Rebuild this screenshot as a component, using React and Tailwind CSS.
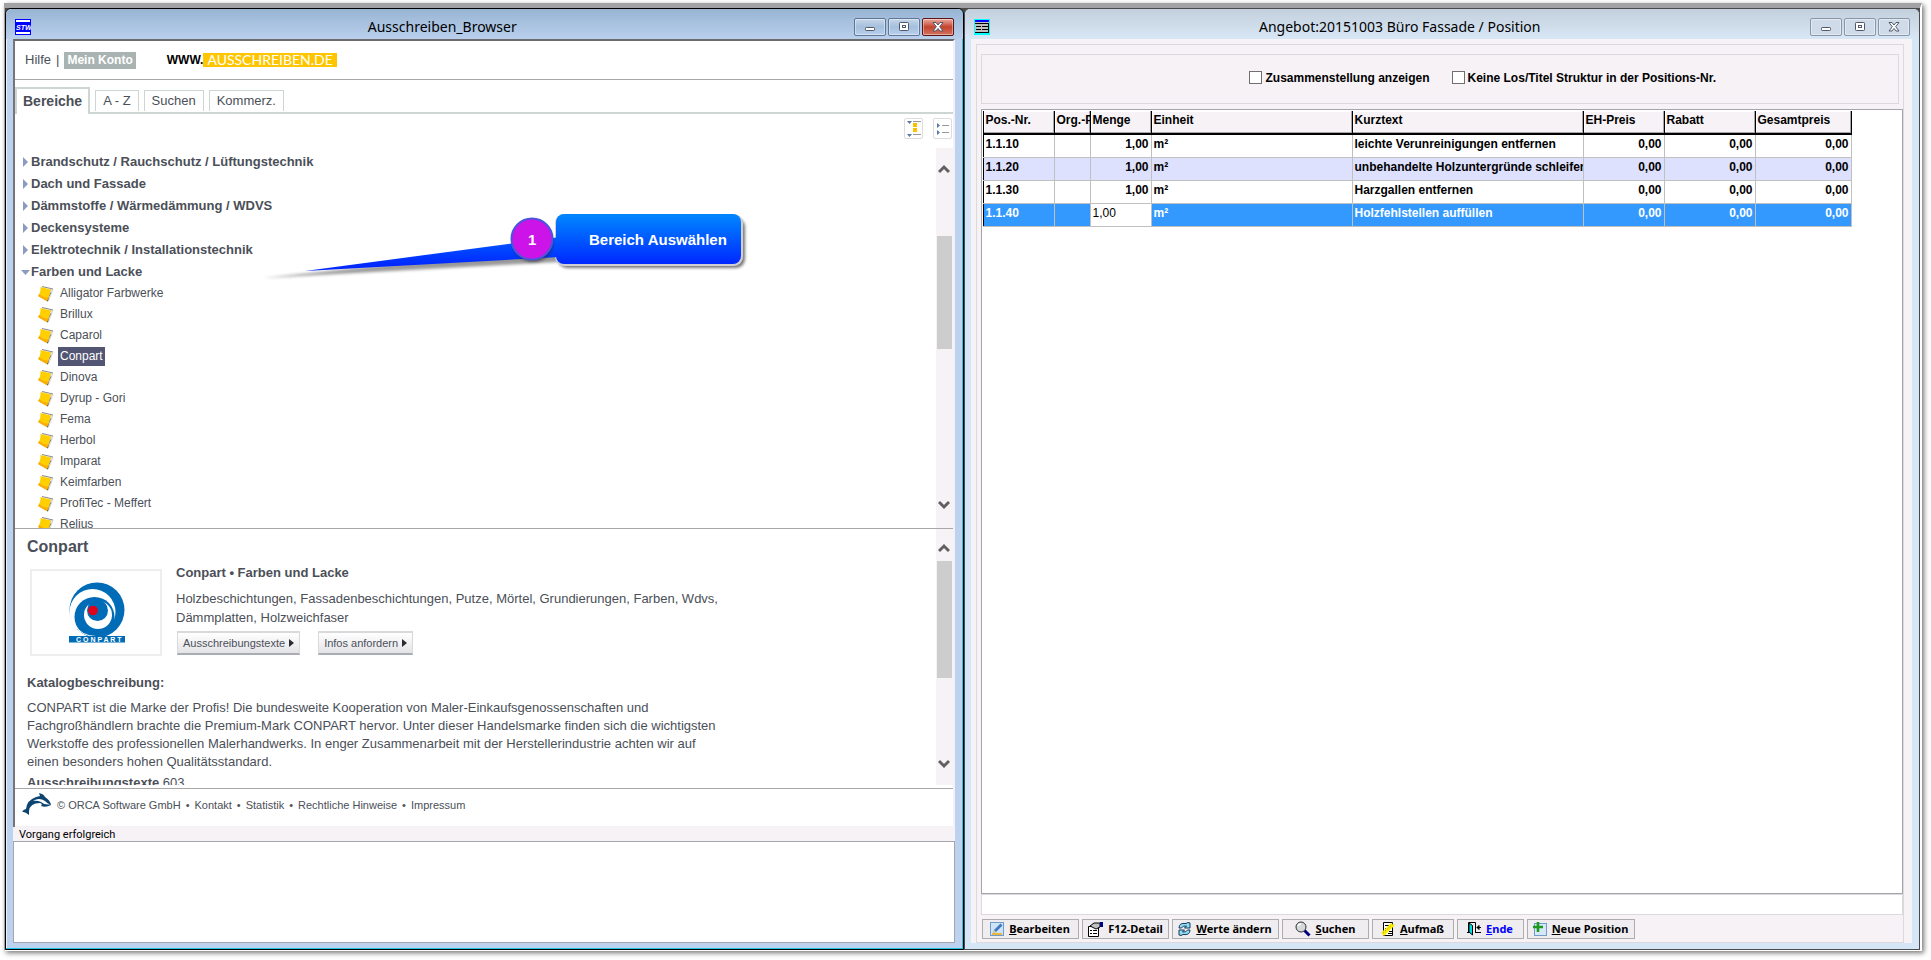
import React, { useState } from 'react';

const groups = [
  'Brandschutz / Rauchschutz / Lüftungstechnik',
  'Dach und Fassade',
  'Dämmstoffe / Wärmedämmung / WDVS',
  'Deckensysteme',
  'Elektrotechnik / Installationstechnik',
];

const vendors = [
  'Alligator Farbwerke', 'Brillux', 'Caparol', 'Conpart', 'Dinova', 'Dyrup - Gori',
  'Fema', 'Herbol', 'Imparat', 'Keimfarben', 'ProfiTec - Meffert', 'Relius',
];

const columns = [
  { label: 'Pos.-Nr.', width: 'w-[71px]' },
  { label: 'Org.-P', width: 'w-[36px]' },
  { label: 'Menge', width: 'w-[61px]' },
  { label: 'Einheit', width: 'w-[201px]' },
  { label: 'Kurztext', width: 'w-[231px]' },
  { label: 'EH-Preis', width: 'w-[81px]' },
  { label: 'Rabatt', width: 'w-[91px]' },
  { label: 'Gesamtpreis', width: 'w-[96px]' },
];

const positions = [
  { nr: '1.1.10', text: 'leichte Verunreinigungen entfernen' },
  { nr: '1.1.20', text: 'unbehandelte Holzuntergründe schleifen' },
  { nr: '1.1.30', text: 'Harzgallen entfernen' },
  { nr: '1.1.40', text: 'Holzfehlstellen auffüllen' },
];

const App = () => {
  return (
    <div className="h-screen min-h-[760px] overflow-hidden bg-white pt-[3px] pr-[9px] pb-[9px] pl-1">
      <div className="flex h-full border-t-[5px] border-r-2 border-b border-l border-t-[#a2a2a4] border-r-white border-b-white border-l-[#a2a2a4] bg-[#4a4a4a] shadow-[2px_2px_5px_#777]">
        <BrowserWindow />
        <OfferWindow />
      </div>
    </div>
  );
};

const BrowserWindow = () => {
  const [selected, setSelected] = useState('Conpart');

  return (
    <section className="relative flex min-w-0 flex-[959] flex-col rounded-t-md border border-black bg-[#bcd2ef] font-['Liberation_Sans',Arial,sans-serif] text-[#4b4f58] shadow-[inset_-1px_-1px_0_#22c7e8,inset_1px_1px_0_#eaf4fc]">
      <TitleBar title="Ausschreiben_Browser" icon={<StwIcon />} active />
      <div className="mr-2 mb-[6px] ml-[7px] flex min-h-0 flex-1 flex-col bg-[#f6f2f6]">
        <div className="flex min-h-0 flex-1 flex-col border-2 border-t-[#6d6a70] border-r-[#f4f2f4] border-b-0 border-l-[#77747a] bg-white">
          <header className="flex h-[39px] shrink-0 items-center border-b border-[#a8a8a8] pl-[10px] text-[13px]">
            <a href="#hilfe">Hilfe</a>
            <span className="mx-[5px]">|</span>
            <a href="#konto" className="bg-[#a9b3b1] px-[3px] text-[12px] leading-[17px] font-bold text-white">Mein Konto</a>
            <a href="#start" className="ml-[31px] flex items-center leading-[14px]">
              <span className="text-[12px] font-bold text-black">WWW.</span>
              <span className="flex h-[14px] items-center bg-[#ffc600] px-1 font-['Lato',sans-serif] text-[14px] text-white">AUSSCHREIBEN.DE</span>
            </a>
          </header>

          <nav className="flex h-[34px] shrink-0 items-end gap-[5px] text-[13px] shadow-[inset_0_-2px_0_#ced6d4]">
            <button className="h-[27px] border-2 border-b-0 border-[#ced6d4] bg-white px-[6px] text-[14px] font-bold">Bereiche</button>
            <button className="mb-[3px] h-[21px] border border-b-0 border-[#ced6d4] px-[7px]">A - Z</button>
            <button className="mb-[3px] h-[21px] border border-b-0 border-[#ced6d4] px-[7px]">Suchen</button>
            <button className="mb-[3px] h-[21px] border border-b-0 border-[#ced6d4] px-[7px]">Kommerz.</button>
          </nav>

          <div className="flex h-[34px] shrink-0 items-start justify-end gap-[10px] pt-1 pr-px">
            <button aria-label="Alle aufklappen" className="h-[21px] w-[19px] rounded-xs border border-[#ddd]"><ExpandIcon /></button>
            <button aria-label="Alle zuklappen" className="h-[21px] w-[19px] rounded-xs border border-[#ddd]"><CollapseIcon /></button>
          </div>

          <div className="flex min-h-0 flex-1 border-b border-[#a8a8a8]">
            <ul className="min-w-0 flex-1 overflow-hidden pt-[3px] text-[13px] font-bold">
              {groups.map((name) => (
                <li key={name} className="flex h-[22px] items-center pl-2">
                  <button className="flex items-center gap-[3px]">
                    <svg width="5" height="10" viewBox="0 0 5 10"><path d="M0 0L5 5L0 10Z" fill="#8c9cc0" /></svg>
                    {name}
                  </button>
                </li>
              ))}
              <li>
                <button className="flex h-[22px] items-center gap-[1px] pl-[6px]">
                  <svg width="9" height="5" viewBox="0 0 9 5"><path d="M0 0H9L4.5 5Z" fill="#8c9cc0" /></svg>
                  Farben und Lacke
                </button>
                <ul className="text-[12px] font-normal">
                  {vendors.map((name) => (
                    <li key={name} className="flex h-[21px] items-center gap-1 pl-[23px]">
                      <CatalogIcon />
                      <button
                        onClick={() => setSelected(name)}
                        className={name === selected ? 'bg-[#525672] px-[2px] leading-[19px] text-white' : 'px-[2px] leading-[19px]'}
                      >
                        {name}
                      </button>
                    </li>
                  ))}
                </ul>
              </li>
            </ul>
            <ScrollBar className="pt-[16px] pb-[18px]" thumb="mt-[62px] h-[113px]" />
          </div>

          <div className="flex h-[260px] shrink-0 border-b border-[#a8a8a8] pb-[3px]">
            <article className="min-w-0 flex-1 overflow-hidden pt-2 pl-3 text-[13px]">
              <h1 className="text-[16px] leading-5 font-bold">Conpart</h1>
              <div className="mt-[12px] flex gap-[14px] pl-[3px]">
                <div className="flex h-[87px] w-[132px] shrink-0 justify-center border-2 border-[#eee] pt-[11px] pl-px">
                  <ConpartLogo />
                </div>
                <div className="-mt-1">
                  <h2 className="leading-4 font-bold">Conpart • Farben und Lacke</h2>
                  <p className="mt-2 max-w-[570px] leading-[19px]">
                    Holzbeschichtungen, Fassadenbeschichtungen, Putze, Mörtel, Grundierungen, Farben, Wdvs,<br />
                    Dämmplatten, Holzweichfaser
                  </p>
                  <div className="mt-1 ml-px flex gap-[18px]">
                    <MoreButton>Ausschreibungstexte</MoreButton>
                    <MoreButton>Infos anfordern</MoreButton>
                  </div>
                </div>
              </div>
              <h2 className="mt-[19px] leading-4 font-bold">Katalogbeschreibung:</h2>
              <p className="mt-2 max-w-[720px] leading-[18px]">
                CONPART ist die Marke der Profis! Die bundesweite Kooperation von Maler-Einkaufsgenossenschaften und<br />
                Fachgroßhändlern brachte die Premium-Mark CONPART hervor. Unter dieser Handelsmarke finden sich die wichtigsten<br />
                Werkstoffe des professionellen Malerhandwerks. In enger Zusammenarbeit mit der Herstellerindustrie achten wir auf<br />
                einen besonders hohen Qualitätsstandard.
              </p>
              <p className="mt-1 leading-4"><b>Ausschreibungstexte</b> 603</p>
            </article>
            <ScrollBar className="pt-[14px] pb-[16px]" thumb="mt-[8px] h-[117px]" />
          </div>

          <footer className="flex h-[38px] shrink-0 items-center gap-[5px] border-b border-[#f4f2f4] pb-[5px] pl-[7px] text-[11px]">
            <OrcaIcon />
            <span className="ml-px">© ORCA Software GmbH</span>
            <span>•</span><a href="#kontakt">Kontakt</a>
            <span>•</span><a href="#statistik">Statistik</a>
            <span>•</span><a href="#recht">Rechtliche Hinweise</a>
            <span>•</span><a href="#impressum">Impressum</a>
          </footer>
        </div>
        <label htmlFor="log" className="h-[14px] shrink-0 pl-[6px] font-['Roboto',sans-serif] text-[11px] leading-4 text-black">Vorgang erfolgreich</label>
        <textarea id="log" readOnly className="h-[102px] shrink-0 resize-none border border-[#a5a5ad] bg-white" />
      </div>
      <Callout />
    </section>
  );
};

const OfferWindow = () => (
  <section className="flex min-w-0 flex-[957] flex-col rounded-t-md border border-[#4a4a4a] bg-[#d5e6f6]">
    <TitleBar title="Angebot:20151003 Büro Fassade / Position" icon={<TableIcon />} />
    <div className="mr-[7px] mb-[6px] ml-[6px] flex min-h-0 flex-1 flex-col bg-[#f6f2f6] pt-[5px] pr-2 pl-[5px] font-['Liberation_Sans',Arial,sans-serif] text-[12px] font-bold text-black">
      <div className="flex min-h-0 flex-1 flex-col border border-[#dcd9de] pt-[9px] pl-1">
        <div className="mr-1 flex h-[50px] shrink-0 items-center justify-center gap-[22px] border border-[#dcd9de] pb-[3px] pl-[86px]">
          <Check id="summary" label="Zusammenstellung anzeigen" />
          <Check id="structure" label="Keine Los/Titel Struktur in der Positions-Nr." />
        </div>

        <div className="mt-[5px] min-h-0 flex-1 overflow-hidden border border-[#a5a5ad] bg-white pt-px pl-px">
          <table className="w-[869px] table-fixed border-collapse text-left">
            <thead>
              <tr className="h-[23px]">
                {columns.map((col) => (
                  <th key={col.label} className={`${col.width} overflow-hidden border-r border-b-2 border-l border-black bg-[#f6f2f6] px-[2px] pb-1 leading-4 whitespace-nowrap shadow-[inset_-1px_-1px_0_#a9a6ab,inset_1px_1px_0_#fff]`}>
                    {col.label}
                  </th>
                ))}
              </tr>
            </thead>
            <tbody>
              {positions.map((row, i) => (
                <PositionRow key={row.nr} row={row} striped={i === 1} active={i === 3} />
              ))}
            </tbody>
          </table>
        </div>

        <div className="h-[21px] shrink-0 border border-[#dcd9de] bg-white" />

        <div className="mt-1 mb-[3px] flex h-5 shrink-0 gap-[3px] pl-px font-['Noto_Sans',sans-serif] text-[11px]">
          <ToolButton width="w-[97px]" icon={<EditIcon />} hot="B" rest="earbeiten" />
          <ToolButton width="w-[87px]" icon={<DetailIcon />} hot="" rest="F12-Detail" />
          <ToolButton width="w-[107px]" icon={<RefreshIcon />} hot="W" rest="erte ändern" />
          <ToolButton width="w-[87px]" icon={<SearchIcon />} hot="S" rest="uchen" />
          <ToolButton width="w-[82px]" icon={<MeasureIcon />} hot="A" rest="ufmaß" />
          <ToolButton width="w-[67px]" icon={<ExitIcon />} hot="E" rest="nde" blue />
          <ToolButton width="w-[108px]" icon={<NewIcon />} hot="N" rest="eue Position" />
        </div>
      </div>
    </div>
  </section>
);

const PositionRow = ({ row, striped, active }) => {
  const cell = 'h-[23px] overflow-hidden border border-[#c0c0c0] px-[2px] pb-1 leading-4 whitespace-nowrap';
  const tone = active ? 'bg-[#3399ff] text-white' : striped ? 'bg-[#dde1fd]' : 'bg-white';

  return (
    <tr className={tone}>
      <td className={`${cell} border-l-black`}>{row.nr}</td>
      <td className={cell} />
      {active ? (
        <td className="h-[23px] border border-[#c0c0c0] bg-white p-0">
          <input aria-label="Menge" defaultValue="1,00" className="block h-[21px] w-full bg-white px-[2px] pb-1 font-normal text-black outline-none" />
        </td>
      ) : (
        <td className={`${cell} text-right`}>1,00</td>
      )}
      <td className={cell}>m²</td>
      <td className={cell}>{row.text}</td>
      <td className={`${cell} text-right`}>0,00</td>
      <td className={`${cell} text-right`}>0,00</td>
      <td className={`${cell} text-right`}>0,00</td>
    </tr>
  );
};

const TitleBar = ({ title, icon, active }) => (
  <div className={`flex h-[30px] shrink-0 items-center justify-between rounded-t-md px-[9px] pt-[6px] ${active ? 'bg-linear-to-b from-[#98b4d3] to-[#b9d0ed]' : 'bg-linear-to-b from-[#c3cfdc] to-[#d8e7f6]'}`}>
    {icon}
    <h1 className="min-w-0 flex-1 truncate text-center font-['Noto_Sans',sans-serif] text-[14px] leading-5 text-black">{title}</h1>
    <div className="flex gap-[2px]">
      <WinButton kind="min" active={active} />
      <WinButton kind="max" active={active} />
      <WinButton kind="close" active={active} />
    </div>
  </div>
);

const winLabels = { min: 'Minimieren', max: 'Maximieren', close: 'Schließen' };

const WinButton = ({ kind, active }) => {
  let look = 'border-[#8896a8] bg-[#cfdbe8]';
  if (active) look = 'border-[#5f7796] bg-linear-to-b from-[#c5d6ea] via-[#a5bfdc] to-[#b9d0ed]';
  if (active && kind === 'close') look = 'border-[#5b1717] bg-linear-to-b from-[#eaa99f] via-[#c3422e] to-[#d1735f]';

  return (
    <button aria-label={winLabels[kind]} className={`flex h-[18px] w-8 items-center justify-center rounded-xs border shadow-[inset_0_0_0_1px_#ffffff66] ${look}`}>
      <svg width="12" height="10" viewBox="0 0 12 10" fill="#fff" stroke="#50586a">
        {kind === 'min' && <rect x="1.5" y="5.5" width="9" height="3" rx="0.8" />}
        {kind === 'max' && (
          <>
            <rect x="1.5" y="0.5" width="9" height="8" rx="0.8" />
            <rect x="4.5" y="3.5" width="3" height="2" />
          </>
        )}
        {kind === 'close' && <path d="M1 .5H4L6 3L8 .5H11L7.7 4.7L11 9H8L6 6.5L4 9H1L4.3 4.7Z" />}
      </svg>
    </button>
  );
};

const ScrollBar = ({ className, thumb }) => (
  <div className={`flex w-[17px] shrink-0 flex-col items-center bg-[#f6f2f6] ${className}`}>
    <svg width="12" height="10" viewBox="0 0 12 10" className="shrink-0"><path d="M1 8L6 3L11 8" fill="none" stroke="#606060" strokeWidth="3" /></svg>
    <div className={`w-[15px] bg-[#cdcdcd] ${thumb}`} />
    <svg width="12" height="10" viewBox="0 0 12 10" className="mt-auto shrink-0"><path d="M1 2L6 7L11 2" fill="none" stroke="#606060" strokeWidth="3" /></svg>
  </div>
);

const MoreButton = ({ children }) => (
  <button className="flex h-6 items-center gap-1 border-2 border-x border-[#d9d9db] border-b-[#a9acb2] bg-linear-to-b from-white to-[#e4e4e8] px-[5px] text-[11px]">
    {children}
    <svg width="5" height="8" viewBox="0 0 5 8"><path d="M0 0L5 4L0 8Z" fill="#2b2b30" /></svg>
  </button>
);

const Check = ({ id, label }) => (
  <div className="flex items-center gap-[3px]">
    <input id={id} type="checkbox" className="h-[13px] w-[13px] appearance-none border border-[#707070] bg-white checked:bg-[#3399ff]" />
    <label htmlFor={id}>{label}</label>
  </div>
);

const ToolButton = ({ width, icon, hot, rest, blue }) => (
  <button className={`flex shrink-0 items-center justify-center gap-[5px] border border-[#adadad] bg-[#efedef] leading-4 font-bold whitespace-nowrap ${width} ${blue ? 'text-[#0000ff]' : 'text-black'}`}>
    {icon}
    <span><u>{hot}</u>{rest}</span>
  </button>
);

// marker with pointer towards the selected group
const Callout = () => (
  <div className="absolute top-[204px] left-[254px] h-[72px] w-[490px]">
    <svg width="490" height="72" viewBox="0 0 490 72" className="absolute inset-0">
      <defs>
        <linearGradient id="calloutFill" x1="0" y1="0" x2="0" y2="1">
          <stop offset="0" stopColor="#0088ff" />
          <stop offset="1" stopColor="#0028ff" />
        </linearGradient>
        <linearGradient id="pointerFill" gradientUnits="userSpaceOnUse" x1="0" y1="1" x2="0" y2="52">
          <stop offset="0" stopColor="#0088ff" />
          <stop offset="1" stopColor="#0028ff" />
        </linearGradient>
        <filter id="soft" x="-10%" y="-30%" width="120%" height="170%"><feGaussianBlur stdDeviation="1.8" /></filter>
      </defs>
      <path d="M3 65L298 34V49Z" fill="#555" opacity="0.6" filter="url(#soft)" />
      <rect x="298" y="5" width="187" height="50" rx="9" fill="#555" opacity="0.8" filter="url(#soft)" />
      <rect x="295" y="1" width="188" height="52" rx="9" fill="#cfcfd4" />
      <path d="M45 58L300 24V44Z" fill="url(#pointerFill)" />
      <rect x="296" y="1" width="185" height="50" rx="8" fill="url(#calloutFill)" />
      <circle cx="273" cy="29" r="20" fill="#222" opacity="0.6" filter="url(#soft)" />
      <circle cx="272" cy="26" r="20.5" fill="#cc14e8" stroke="#4a55dd" strokeWidth="2" />
    </svg>
    <div className="relative flex h-[54px] items-center pl-[268px] text-[15px] font-bold text-white">
      <span className="w-[61px]">1</span>
      <span>Bereich Auswählen</span>
    </div>
  </div>
);

const StwIcon = () => (
  <svg width="16" height="16" viewBox="0 0 16 16">
    <rect width="16" height="16" fill="#0000ff" />
    <path d="M1 2H15M1 14H15" stroke="#fff" strokeWidth="2" />
    <text x="1" y="10.5" fontSize="7" fontStyle="italic" fontWeight="bold" fill="#fff">STW</text>
  </svg>
);

const TableIcon = () => (
  <svg width="16" height="16" viewBox="0 0 16 16" shapeRendering="crispEdges">
    <rect width="16" height="16" fill="#00ffff" />
    <rect x="1" y="1" width="14" height="13" fill="#c0c0c0" />
    <rect x="1" y="1" width="14" height="2" fill="#0000ff" />
    <path d="M1 4.5H15M2 7.5H7M8 7.5H14M2 10.5H7M8 10.5H14M1 13.5H14M14.5 4V14" stroke="#000" />
  </svg>
);

const ExpandIcon = () => (
  <svg width="17" height="19" viewBox="0 0 17 19">
    <path d="M2 2H7L4.5 5ZM2 15H7L4.5 18Z" fill="#5b78ad" />
    <path d="M8 2.5H16M8 15.5H16" stroke="#999" />
    <rect x="8" y="4" width="4" height="4" fill="#f8c200" />
    <rect x="8" y="9" width="4" height="4" fill="#f8c200" />
  </svg>
);

const CollapseIcon = () => (
  <svg width="17" height="19" viewBox="0 0 17 19">
    <path d="M3 4L6 6.5L3 9ZM3 11L6 13.5L3 16Z" fill="#5b78ad" />
    <path d="M8 6.5H15M8 13.5H15" stroke="#999" />
  </svg>
);

const CatalogIcon = () => (
  <svg width="16" height="16" viewBox="0 0 16 16" className="shrink-0">
    <path d="M12 2.5L15.5 3.5L11.5 14L9.5 15.5Z" fill="#dedede" />
    <path d="M12 7L8.5 15L10 15.5L11 11L13.5 6Z" fill="#666" />
    <path d="M2.5 1L13 3.5L12 7Q11 12 8.5 15L0 10Q3 6 2.5 1Z" fill="#ffcf00" />
    <path d="M1.5 8Q5 12 10.5 11.5L8.5 15L0 10Z" fill="#f9ad0a" />
    <path d="M4 .5L15 3" stroke="#888" strokeWidth="1" />
  </svg>
);

const ConpartLogo = () => (
  <svg width="58" height="62" viewBox="0 0 58 62">
    <circle cx="29" cy="28" r="27.5" fill="#006bb6" />
    <circle cx="24.5" cy="30" r="23" fill="#fff" />
    <circle cx="26.5" cy="35" r="20" fill="#006bb6" />
    <circle cx="30" cy="33" r="14" fill="#fff" />
    <circle cx="29.5" cy="28.5" r="10.5" fill="#006bb6" />
    <path d="M20 19Q26 15 33 19Q24 19 21 26Z" fill="#006bb6" />
    <circle cx="25" cy="28.5" r="4.8" fill="#e2001a" />
    <path d="M7 43Q13 54 28 54.5" fill="none" stroke="#fff" />
    <rect x="1" y="54" width="56" height="6.5" fill="#006bb6" />
    <text x="8" y="60" fontSize="7" fontWeight="bold" fill="#fff" fontFamily="Liberation Sans">C O N P A R T</text>
  </svg>
);

const OrcaIcon = () => (
  <svg width="29" height="24" viewBox="0 0 29 24">
    <path d="M4 16Q5 7 14 4L18 3L17 0Q22 1 23 4Q28 7 29 12Q24 15 19 13Q21 11 18 10Q8 10 7 18L7 22Q4 19 0 18.5Q2 16 4 16Z" fill="#0d4570" />
    <path d="M11 8Q17 4 23 8Q25 10 28 11.5Q22 12 19 9Q15 7 11 8Z" fill="#fff" />
  </svg>
);

const EditIcon = () => (
  <svg width="14" height="14" viewBox="0 0 14 14">
    <rect x="0.5" y="0.5" width="13" height="13" fill="#cfe3f7" stroke="#6f9bc8" />
    <path d="M3 11L4 8L10.5 1.5L12.5 3.5L6 10Z" fill="#3f79c4" />
    <path d="M2 12H12" stroke="#e8b93c" strokeWidth="2" />
    <path d="M3 11L4 8L6 10Z" fill="#f4d47c" />
  </svg>
);

const DetailIcon = () => (
  <svg width="16" height="15" viewBox="0 0 16 15">
    <path d="M1.5 4.5H11.5V14.5H1.5Z" fill="#fff" stroke="#000" />
    <path d="M3 8.5H5M6 8.5H10M3 11.5H5M6 11.5H10" stroke="#000" />
    <path d="M3 4L7 1H13V5L9 7Z" fill="#c0c0c0" stroke="#000" />
    <rect x="13" y="0" width="3" height="5" fill="#000080" />
  </svg>
);

const RefreshIcon = () => (
  <svg width="13" height="14" viewBox="0 0 13 14" fill="#8fdcf5" stroke="#173a5a">
    <path d="M1 6Q1 .5 8 1.5L10 .5L12 1V6H6.5L8.5 4Q4.5 3.5 3.5 6Z" />
    <path d="M12 8Q12 13.5 5 12.5L3 13.5L1 13V8H6.5L4.5 10Q8.5 10.5 9.5 8Z" />
  </svg>
);

const SearchIcon = () => (
  <svg width="16" height="16" viewBox="0 0 16 16">
    <path d="M9.5 9.5L14.5 14.5" stroke="#000080" strokeWidth="3" />
    <circle cx="6" cy="6" r="5" fill="#d5d9dc" stroke="#333" />
    <path d="M3 5Q4 3 6 3" fill="none" stroke="#fff" strokeWidth="1.5" />
  </svg>
);

const MeasureIcon = () => (
  <svg width="14" height="14" viewBox="0 0 14 14">
    <path d="M2.5 .5H11.5V13.5H2.5Z" fill="#fff" stroke="#000" />
    <path d="M4 3.5H9M4 6.5H9M8 9.5H11M7 11.5H11" stroke="#000" />
    <path d="M0 11L10 1L14 3L3 14Z" fill="#ffee00" />
    <path d="M2 11L12 2" stroke="#777" strokeDasharray="1 2" />
  </svg>
);

const ExitIcon = () => (
  <svg width="14" height="14" viewBox="0 0 14 14">
    <path d="M1.5 10V.5H8.5V10.5M0 10.5H3M8 10.5H14" fill="none" stroke="#000" />
    <path d="M2 1L5.5 3.5V13L2 10Z" fill="#00e0e0" stroke="#000" />
    <path d="M14 5.5H10M12 3.5L10 5.5L12 7.5Z" fill="#000" stroke="#000" />
  </svg>
);

const NewIcon = () => (
  <svg width="14" height="14" viewBox="0 0 14 14">
    <rect x="1.5" y="1.5" width="12" height="12" fill="#d6e8f8" stroke="#6f9bc8" />
    <path d="M5 0V10M0 5H10" stroke="#1c9a1c" strokeWidth="2.6" />
  </svg>
);

export default App;
